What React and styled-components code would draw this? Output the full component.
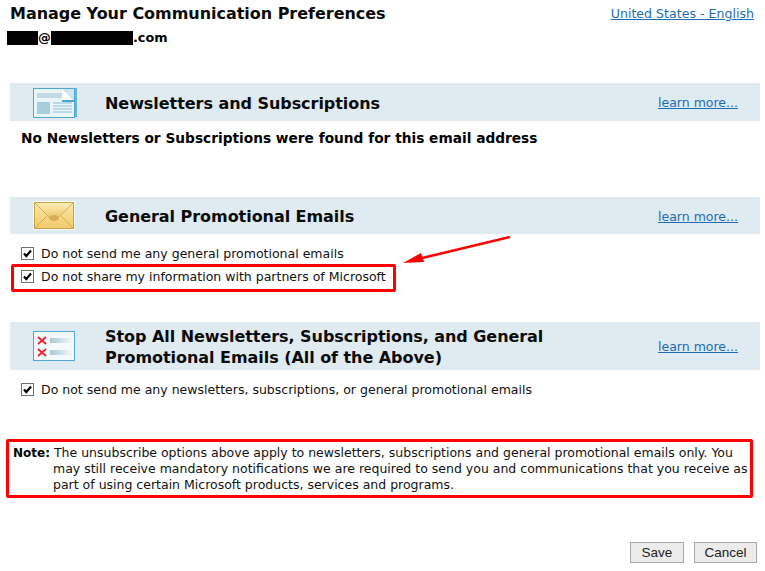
import styled, { createGlobalStyle } from "styled-components";

const GlobalStyle = createGlobalStyle`
  html, body {
    margin: 0;
    padding: 0;
    background: #fff;
  }
  body {
    font-family: "DejaVu Sans", Verdana, sans-serif;
    color: #000;
  }
`;

const Page = styled.div`
  position: relative;
  width: 765px;
  height: 571px;
  overflow: hidden;
  padding: 0 5px 0 10px;
  box-sizing: border-box;
`;

const Top = styled.div`
  display: flex;
  justify-content: space-between;
  align-items: flex-start;
  height: 83px;
`;

const Title = styled.h1`
  margin: 4px 0 0;
  font-size: 16px;
  line-height: 20px;
  font-weight: 700;
  letter-spacing: -0.03px;
  color: #0a0a0a;
`;

const Email = styled.div`
  margin: 5px 0 0 -3px;
  display: flex;
  align-items: center;
  font-size: 12.8px;
  line-height: 18px;
  font-weight: 700;
`;

const Redact = styled.span`
  display: inline-block;
  width: ${(p) => p.$w}px;
  height: 14px;
  background: #000;
`;

const At = styled.span`
  width: 13px;
`;

const Locale = styled.a`
  margin: 6px 6px 0 0;
  font-size: 12.6px;
  line-height: 15px;
  color: #1c6db5;
  text-decoration: underline;
`;

const Bar = styled.div`
  display: flex;
  align-items: center;
  width: 750px;
  height: ${(p) => p.$h}px;
  background: #e0eaf1;
`;

const IconSlot = styled.div`
  flex: none;
  width: 95px;
  display: flex;
  padding-left: 23px;
  box-sizing: border-box;
`;

const BarTitle = styled.h2`
  flex: 1;
  margin: 0;
  padding-top: 2px;
  font-size: 16px;
  line-height: 21px;
  font-weight: 700;
  letter-spacing: -0.05px;
  color: #0a0a0a;
`;

const More = styled.a`
  flex: none;
  margin-right: 22px;
  padding-top: ${(p) => p.$nudge || 0}px;
  font-size: 12.5px;
  color: #1c6db5;
  text-decoration: underline;
`;

const Message = styled.p`
  margin: 9px 0 0 11px;
  height: 67px;
  font-size: 13.72px;
  line-height: 16px;
  font-weight: 700;
`;

const Options = styled.div`
  padding-top: ${(p) => p.$top}px;
  height: ${(p) => p.$height}px;
  box-sizing: border-box;
`;

const Row = styled.label`
  display: flex;
  align-items: center;
  gap: 7px;
  height: 24px;
  padding-left: 11px;
  font-size: 12.52px;
  color: #111;
`;

const Flagged = styled.div`
  width: 385px;
  height: 28px;
  margin: -1px 0 0 1px;
  border: 3px solid #f00;
  border-radius: 2px;
  box-sizing: border-box;
  & > label {
    margin-top: -3px;
    padding-left: 7px;
  }
`;

const Box = styled.span`
  flex: none;
  width: 13px;
  height: 13px;
  border: 1px solid #707070;
  box-sizing: border-box;
  background: #fff;
  display: flex;
  align-items: center;
  justify-content: center;
`;

const Note = styled.div`
  width: 747px;
  height: 59px;
  margin: -1px 0 0 -4px;
  border: 3px solid #f00;
  border-radius: 2px;
  box-sizing: border-box;
  padding: 3px 0 0 44px;
  text-indent: -40px;
  font-size: 12.5px;
  line-height: 16px;
  color: #111;
  & b {
    font-size: 12px;
    color: #000;
  }
`;

const Actions = styled.div`
  display: flex;
  justify-content: flex-end;
  gap: 10px;
  margin: 44px 3px 0 0;
`;

const Btn = styled.button`
  width: ${(p) => p.$w}px;
  height: 21px;
  padding: 0;
  border: 1px solid #a9a9a9;
  border-radius: 0;
  background: #ececec;
  font-family: "Liberation Sans", Arial, sans-serif;
  font-size: 13.5px;
  color: #222;
`;

const Arrow = styled.svg`
  position: absolute;
  left: 400px;
  top: 231px;
`;

function Check() {
  return (
    <Box>
      <svg width="11" height="11" viewBox="0 0 11 11">
        <path d="M2 5.5 L4.3 8 L9 2.5" fill="none" stroke="#000" strokeWidth="2.2" />
      </svg>
    </Box>
  );
}

function NewsIcon() {
  return (
    <svg width="44" height="31" viewBox="0 0 44 31">
      <rect x="3" y="1" width="41" height="29" fill="#6fb4d6" />
      <rect x="0.5" y="1.5" width="41" height="29" fill="#eaf5fa" stroke="#4ea7d2" />
      <rect x="4" y="6" width="26" height="5" fill="#c3d9e4" />
      <rect x="4" y="15" width="13" height="12" fill="#a8cddd" />
      <path d="M20 16h19M20 19h19M20 22h19M20 25h19M31 13h8" stroke="#8cc0d6" />
      <path d="M29 2h12v12h-12z" fill="#cfe6f0" />
      <path d="M29 2l12 12h-12z" fill="#fff" />
      <path d="M29 14h12" stroke="#4ea7d2" strokeWidth="2" />
    </svg>
  );
}

function MailIcon() {
  return (
    <svg width="42" height="29" viewBox="0 0 42 29">
      <defs>
        <linearGradient id="mailFill" x1="0" y1="0" x2="0" y2="1">
          <stop offset="0" stopColor="#fdeaa8" />
          <stop offset="1" stopColor="#f0c868" />
        </linearGradient>
        <linearGradient id="mailFlap" x1="0" y1="0" x2="0" y2="1">
          <stop offset="0" stopColor="#fff0b8" />
          <stop offset="1" stopColor="#e9bd5c" />
        </linearGradient>
      </defs>
      <rect x="0.5" y="0.5" width="41" height="28" fill="url(#mailFill)" stroke="#fff" />
      <rect x="1.5" y="1.5" width="39" height="26" fill="none" stroke="#c9a24a" />
      <path d="M2 27L16 13M40 27L26 13" stroke="#d2ab58" fill="none" />
      <path d="M2 2L18 18Q21 21 24 18L40 2" fill="url(#mailFlap)" stroke="#d6ae58" />
      <ellipse cx="21" cy="17" rx="5" ry="3" fill="#d9ad58" />
    </svg>
  );
}

function StopIcon() {
  return (
    <svg width="42" height="30" viewBox="0 0 42 30">
      <defs>
        <linearGradient id="stopBar" x1="0" y1="0" x2="1" y2="0">
          <stop offset="0" stopColor="#a9c8d6" />
          <stop offset="1" stopColor="#eef6f9" />
        </linearGradient>
      </defs>
      <rect x="0.5" y="0.5" width="41" height="29" fill="#f4fafc" stroke="#4ea7d2" />
      <path d="M5 6L13 13M13 6L5 13M5 18L13 25M13 18L5 25" stroke="#f0222a" strokeWidth="1.8" />
      <rect x="17" y="7" width="21" height="5" fill="url(#stopBar)" />
      <rect x="17" y="19" width="21" height="5" fill="url(#stopBar)" />
    </svg>
  );
}

export default function App() {
  return (
    <Page>
      <GlobalStyle />
      <Top>
        <div>
          <Title>Manage Your Communication Preferences</Title>
          <Email>
            <Redact $w={31} /><At>@</At><Redact $w={82} />.com
          </Email>
        </div>
        <Locale href="#">United States - English</Locale>
      </Top>

      <Bar $h={38}>
        <IconSlot><NewsIcon /></IconSlot>
        <BarTitle>Newsletters and Subscriptions</BarTitle>
        <More href="#">learn more...</More>
      </Bar>
      <Message>No Newsletters or Subscriptions were found for this email address</Message>

      <Bar $h={37}>
        <IconSlot><MailIcon /></IconSlot>
        <BarTitle>General Promotional Emails</BarTitle>
        <More href="#" $nudge={2}>learn more...</More>
      </Bar>
      <Options $top={7} $height={88}>
        <Row><Check />Do not send me any general promotional emails</Row>
        <Flagged>
          <Row><Check />Do not share my information with partners of Microsoft</Row>
        </Flagged>
      </Options>

      <Bar $h={48}>
        <IconSlot><StopIcon /></IconSlot>
        <BarTitle>
          Stop All Newsletters, Subscriptions, and General
          <br />
          Promotional Emails (All of the Above)
        </BarTitle>
        <More href="#">learn more...</More>
      </Bar>
      <Options $top={7} $height={70}>
        <Row><Check />Do not send me any newsletters, subscriptions, or general promotional emails</Row>
      </Options>

      <Note>
        <b>Note:</b> The unsubscribe options above apply to newsletters, subscriptions and general
        promotional emails only. You may still receive mandatory notifications we are required to
        send you and communications that you receive as part of using certain Microsoft products,
        services and programs.
      </Note>

      <Actions>
        <Btn $w={54}>Save</Btn>
        <Btn $w={63}>Cancel</Btn>
      </Actions>

      <Arrow width="112" height="36" viewBox="0 0 112 36">
        <path d="M110 6L18 28" stroke="#f00" strokeWidth="2.5" fill="none" />
        <path d="M3 32L21 22L24 31Z" fill="#f00" />
      </Arrow>
    </Page>
  );
}
